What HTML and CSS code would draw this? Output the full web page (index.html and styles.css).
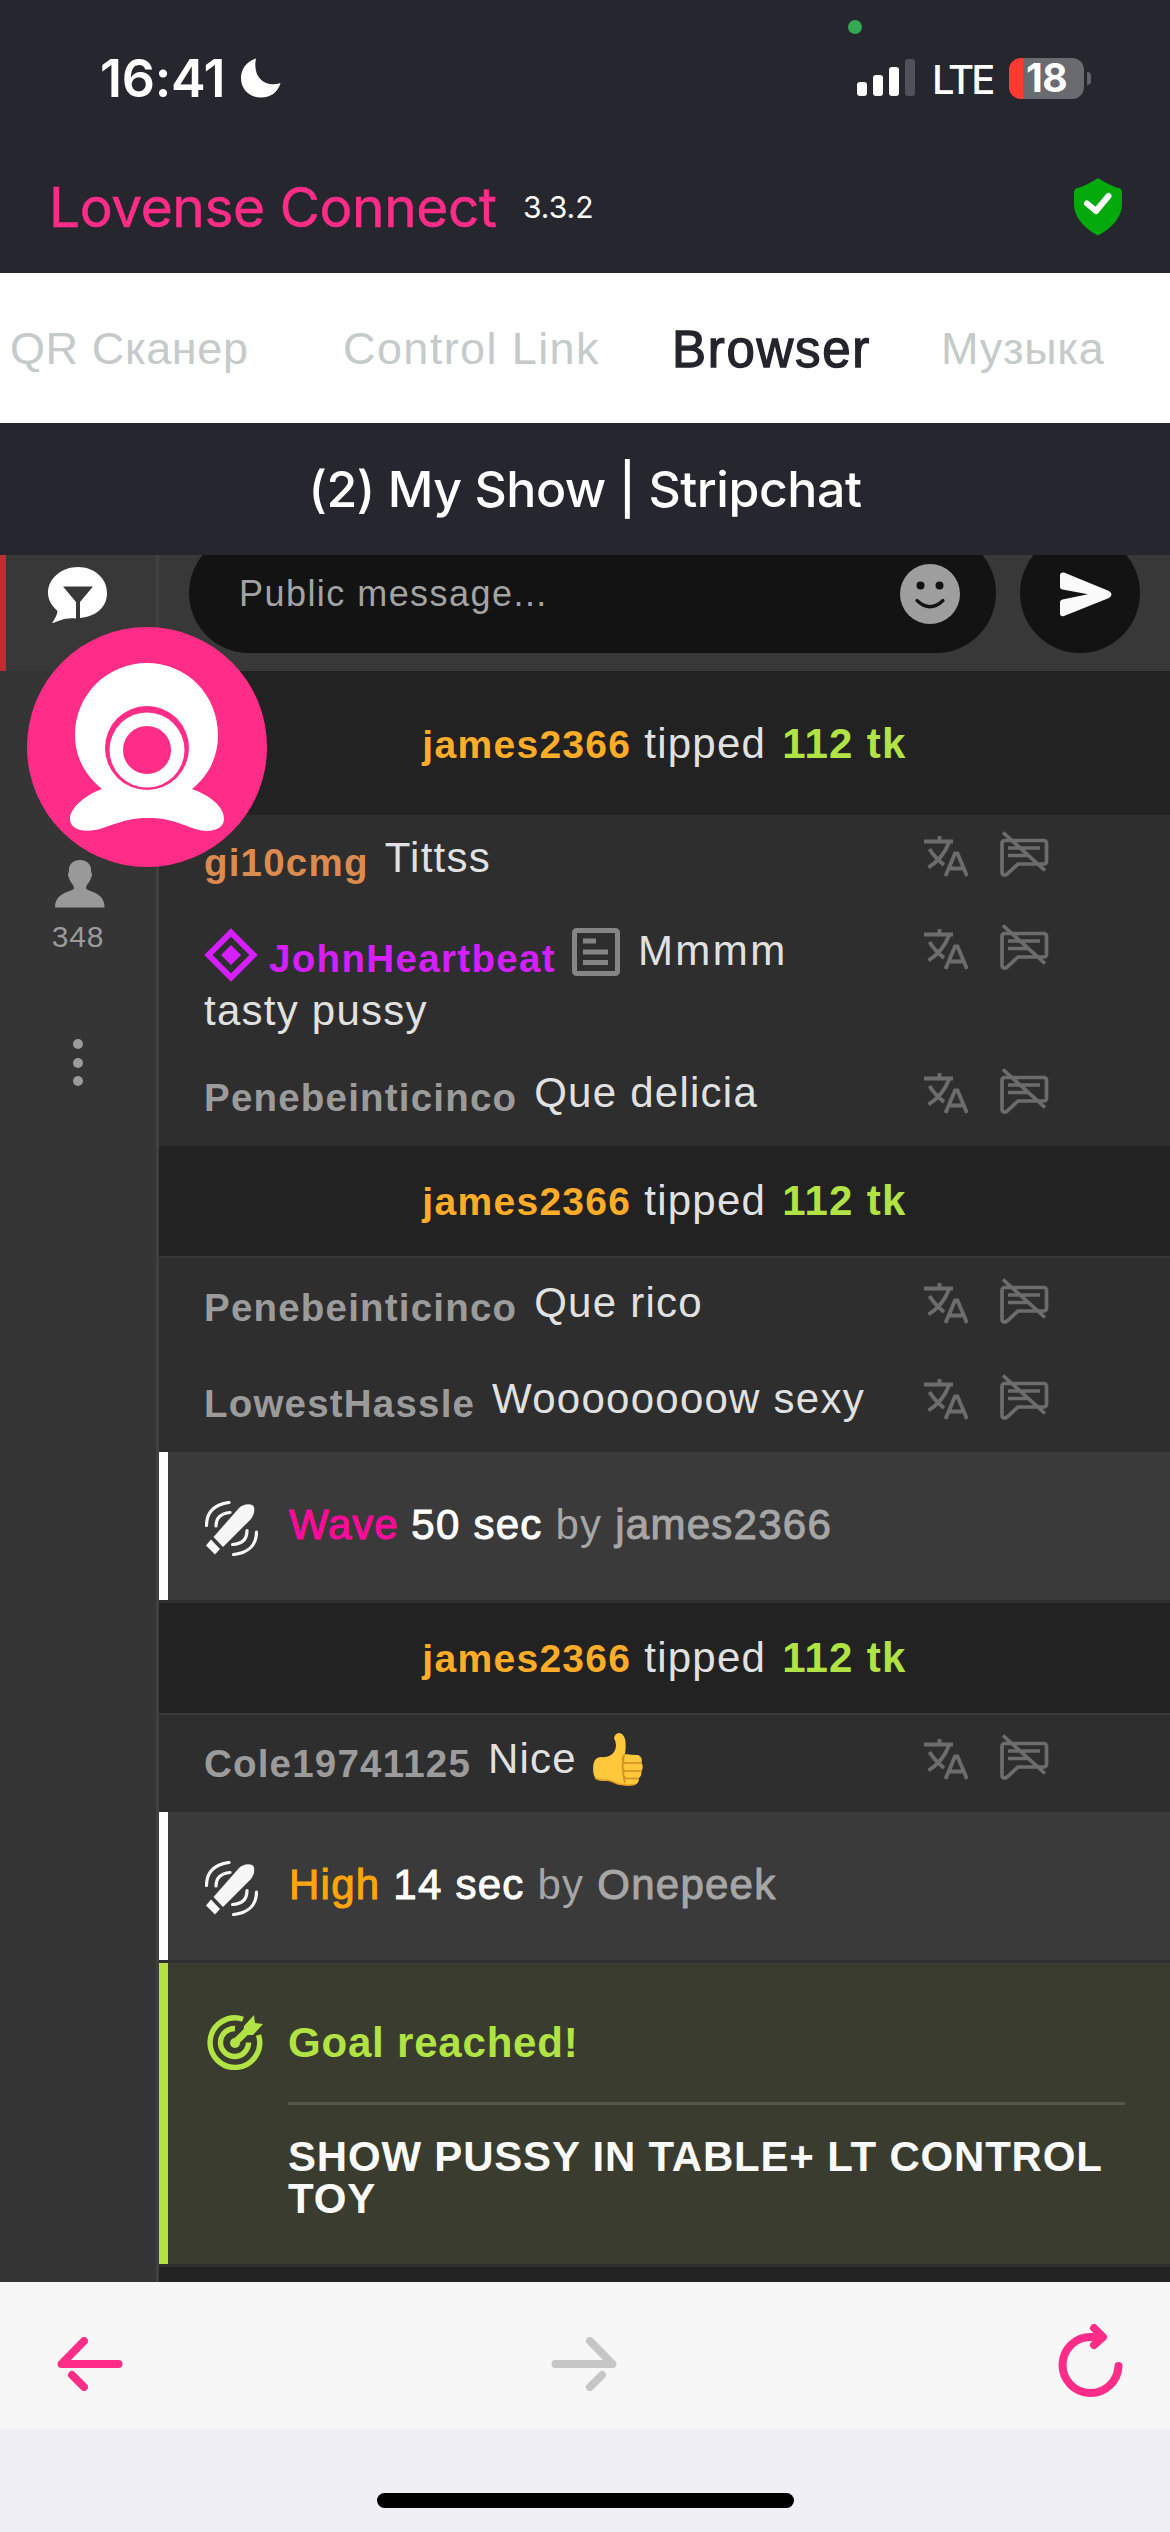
FILE: index.html
```
<!DOCTYPE html>
<html lang="ru">
<head>
<meta charset="utf-8">
<title>Lovense Connect</title>
<link rel="stylesheet" href="styles.css">
</head>
<body>
<svg width="0" height="0" class="defs" aria-hidden="true">
  <symbol id="translate" viewBox="0 0 44 41">
    <path d="M0 5.500H29M15.500 0V6M25 6.500C21 17 14 25.500 4.500 31.500M5.500 13C9 19 14 24 20 29M21.500 40L31 17.500H33.500L43 40M25.500 32.500H39" fill="none" stroke="currentColor" stroke-width="3.800"/>
  </symbol>
  <symbol id="mute" viewBox="0 0 49 46">
    <path d="M4.500 9.500H44A2.500 2.500 0 0 1 46.500 12V30.500A2.500 2.500 0 0 1 44 33H18L6.500 43.500Q2 45 2 41V12A2.500 2.500 0 0 1 4.500 9.500ZM8 17H40M8 24.500H28M3 1.500L45 39.500" fill="none" stroke="currentColor" stroke-width="3.700"/>
  </symbol>
  <symbol id="vibe" viewBox="0 0 53 55">
    <g fill="currentColor">
      <path d="M8.500 36L34 7Q39 2.500 45.500 3.500Q50.500 4 49 12Q48 15 46 18L18 46Z"/>
      <path d="M1 44.500L6 38.500L15 48L10 53.500Z"/>
    </g>
    <path d="M24 1.500C10 3.500 1.500 11 1.500 24.500M25 11.500C15.500 12.500 11 17 11 25M28.500 53.500C43 52 51.500 44 51.500 31M27.500 43.500C37 43 42 38 42 29.500" fill="none" stroke="currentColor" stroke-width="3.200" stroke-linecap="round"/>
  </symbol>
</svg>

<div class="phone">
  <header class="status">
    <i class="rec-dot"></i>
    <span class="time">16:41</span>
    <svg class="moon" width="40" height="40" viewBox="0 0 40 40"><path d="M15 .5C4 4 0 12.500 0 20C0 31 8 39.500 20 39.500C30 39.500 37 34 39.500 25C25 30 11 20 15 .5Z" fill="#fff"/></svg>
    <svg class="signal" width="58" height="38" viewBox="0 0 58 38"><g fill="#fff"><rect y="23" width="10" height="14" rx="3"/><rect x="16" y="16" width="10" height="21" rx="3"/><rect x="32" y="8" width="10" height="29" rx="3"/></g><rect x="48" width="10" height="37" rx="3" fill="#51515a"/></svg>
    <span class="net">LTE</span>
    <span class="battery">18</span><i class="nub"></i>
  </header>

  <div class="brand">
    <span class="brand-name">Lovense Connect</span>
    <span class="version">3.3.2</span>
    <svg class="shield" width="48" height="58" viewBox="0 0 48 58"><path d="M24 0Q34 7 46 10.500Q48 11.500 48 14V25C48 41 36 51 24 57.500C12 51 0 41 0 25V14Q0 11.500 2 10.500Q14 7 24 0Z" fill="#04a90b"/><path d="M13 25.500L22 33L34.500 18" fill="none" stroke="#fff" stroke-width="6" stroke-linecap="round" stroke-linejoin="round"/></svg>
  </div>

  <nav class="tabs">
    <span class="tab qr">QR Сканер</span>
    <span class="tab link">Control Link</span>
    <span class="tab active">Browser</span>
    <span class="tab music">Музыка</span>
  </nav>

  <h1 class="title">(2) My Show | Stripchat</h1>

  <div class="view">
    <aside class="side">
      <div class="side-tab">
        <svg width="60" height="56" viewBox="0 0 60 56"><path d="M30 0C46 0 59 11 59 26C59 40 49 49 32 51V35L45 19.500H15L28 35V51.500C17 50 12 54 4 56Q9 49 9.500 44C4 39 0 33 0 26C0 11 14 0 30 0Z" fill="#fff"/></svg>
      </div>
      <svg class="person" width="50" height="48" viewBox="0 0 50 48"><path d="M25 0C33 0 37 6 36 12Q38 14 36 18C35 22 31 25 31 28C31 32 50 31 49.500 47.500H0C0 31 19 32 19 28C19 25 15 22 14 18Q12 14 14 12C13 6 17 0 25 0Z" fill="#999"/></svg>
      <span class="count">348</span>
      <span class="dots"><i></i><i></i><i></i></span>
    </aside>

    <main class="chat">
      <div class="composer">
        <div class="field">
          <span>Public message...</span>
          <svg width="60" height="60" viewBox="0 0 60 60"><circle cx="30" cy="30" r="30" fill="#9e9e9e"/><circle cx="20.500" cy="21.500" r="4" fill="#131313"/><circle cx="39.500" cy="21.500" r="4" fill="#131313"/><path d="M17 36.500Q30 49 43 36.500" fill="none" stroke="#131313" stroke-width="3.200" stroke-linecap="round"/></svg>
        </div>
        <div class="send">
          <svg width="52" height="45" viewBox="0 0 52 45"><path d="M4 .5L49 19Q54 22.500 49 26L4 44Q0 45 0 41V30Q0 28 2.500 27.500L28 22.300L2.500 17.500Q0 17 0 15V3.500Q0 0 4 .5Z" fill="#fafafa"/></svg>
        </div>
      </div>

      <div class="tip first"><b class="name gold">james2366</b> tipped <b class="amount">112 tk</b></div>

      <div class="msg r1">
        <p><b class="name bronze">gi10cmg</b> Tittss</p>
        <span class="acts"><svg width="44" height="41"><use href="#translate"/></svg><svg class="mute" width="49" height="46"><use href="#mute"/></svg></span>
      </div>
      <div class="msg r2">
        <p><svg class="gem" width="54" height="54" viewBox="0 0 54 54"><path d="M27 4.500L49.500 27L27 49.500L4.500 27Z" fill="none" stroke="#d51fff" stroke-width="6"/><path d="M27 17L37 27L27 37L17 27Z" fill="#d51fff"/></svg> <b class="name violet">JohnHeartbeat</b> <svg class="note" width="48" height="48" viewBox="0 0 48 48"><rect x="2.500" y="2.500" width="43" height="43" rx="2" fill="none" stroke="#858585" stroke-width="5"/><path d="M11 13H24M11 24H36M11 34.500H36" stroke="#858585" stroke-width="5"/></svg> <span class="wide">Mmmm</span> tasty pussy</p>
        <span class="acts"><svg width="44" height="41"><use href="#translate"/></svg><svg class="mute" width="49" height="46"><use href="#mute"/></svg></span>
      </div>
      <div class="msg">
        <p><b class="name">Penebeinticinco</b> Que delicia</p>
        <span class="acts"><svg width="44" height="41"><use href="#translate"/></svg><svg class="mute" width="49" height="46"><use href="#mute"/></svg></span>
      </div>

      <div class="tip"><b class="name gold">james2366</b> tipped <b class="amount">112 tk</b></div>

      <div class="msg after-tip">
        <p><b class="name">Penebeinticinco</b> Que rico</p>
        <span class="acts"><svg width="44" height="41"><use href="#translate"/></svg><svg class="mute" width="49" height="46"><use href="#mute"/></svg></span>
      </div>
      <div class="msg">
        <p><b class="name">LowestHassle</b> Woooooooow sexy</p>
        <span class="acts"><svg width="44" height="41"><use href="#translate"/></svg><svg class="mute" width="49" height="46"><use href="#mute"/></svg></span>
      </div>

      <div class="toy">
        <svg width="53" height="55"><use href="#vibe"/></svg>
        <p><span class="pink">Wave</span> <span class="secs">50 sec</span> by <span class="who">james2366</span></p>
      </div>

      <div class="tip"><b class="name gold">james2366</b> tipped <b class="amount">112 tk</b></div>

      <div class="msg after-tip short">
        <p><b class="name">Cole19741125</b> Nice <svg class="thumb" width="51" height="53" viewBox="0 0 51 53"><path d="M21 5Q22 0 27 0Q32 2 32.500 9Q33 15 32 21Q38 22 45 22Q50 24 48.500 30Q51 34 48.500 38Q49 43 46 45Q46 52 40 52Q32 53 25 51Q18 47 14 47Q7 49 3 46Q-1 41 0.500 31Q2 24 8 24Q17 25 21 19Q25 13 21 5Z" fill="#fdc83b"/><path d="M2 45Q7 48 14 47Q19 48 25 51Q34 53 42 51.500" fill="none" stroke="#e59a24" stroke-width="1.500"/><path d="M32 21Q27 27 32 30H48M30 30Q28 36 32 38H48M31 38Q29 43 33 45.500H46M31 23Q28 35 32 50" fill="none" stroke="#d68f20" stroke-width="1.600"/></svg></p>
        <span class="acts"><svg width="44" height="41"><use href="#translate"/></svg><svg class="mute" width="49" height="46"><use href="#mute"/></svg></span>
      </div>

      <div class="toy">
        <svg width="53" height="55"><use href="#vibe"/></svg>
        <p><span class="orange">High</span> <span class="secs">14 sec</span> by <span class="who">Onepeek</span></p>
      </div>

      <div class="goal">
        <svg width="56" height="55" viewBox="0 0 56 55"><g fill="none" stroke="#b1e344"><path d="M36 4.200A24.800 24.800 0 1 0 51.500 20" stroke-width="5.400"/><path d="M28 13.500A14 14 0 1 0 41.500 27.500" stroke-width="5.400"/><path d="M28 27.500L45 11" stroke-width="7"/></g><circle cx="28" cy="28" r="5" fill="#b1e344"/><path d="M37 11L47 0L48 8L56 9L46 20L36 20Z" fill="#b1e344"/></svg>
        <div class="goal-body">
          <div class="goal-head">Goal reached!</div>
          <div class="goal-text">SHOW PUSSY IN TABLE+ LT CONTROL TOY</div>
        </div>
      </div>
    </main>

    <div class="cam">
      <svg width="240" height="240" viewBox="0 0 240 240"><circle cx="120" cy="120" r="120" fill="#ff2d87"/><path d="M120 36C160 36 191 68 191 108C191 131 181 149 165 162C182 168 197 179 197 192C197 202 184 207 168 202C145 193 136 191 121 191C106 191 99 193 76 201C58 207 43 203 43 192C43 181 58 168 75 162C59 149 48 131 48 108C48 68 80 36 120 36Z" fill="#fff"/><circle cx="120" cy="121" r="42" fill="#ff2d87"/><circle cx="120" cy="123" r="37.500" fill="#fff"/><circle cx="120" cy="123" r="24" fill="#ff2d87"/></svg>
    </div>
  </div>

  <footer class="toolbar">
    <svg width="66" height="54" viewBox="0 0 66 54"><path d="M61.500 27H4.500L27 4M15 38L27 50" fill="none" stroke="#ff2d87" stroke-width="8" stroke-linecap="round" stroke-linejoin="round"/></svg>
    <svg class="forward" width="66" height="54" viewBox="0 0 66 54"><path d="M4.500 27H61.500L39 4M51 38L39 50" fill="none" stroke="#c6c6c6" stroke-width="8" stroke-linecap="round" stroke-linejoin="round"/></svg>
    <svg class="reload" width="65" height="74" viewBox="0 0 65 74"><path d="M60.500 42A28 28 0 1 1 32.500 13H44M36 4L45 13L36 21" fill="none" stroke="#ff2d87" stroke-width="8" stroke-linecap="round" stroke-linejoin="round"/></svg>
  </footer>
  <div class="home"><i></i></div>
</div>
</body>
</html>
```
FILE: styles.css
```
* { box-sizing: border-box; }
body { margin: 0; background: #26262e; }
p, h1 { margin: 0; }
svg { display: block; flex: none; }
.defs { position: absolute; }

.phone {
  width: 1170px;
  height: 2532px;
  display: flex;
  flex-direction: column;
  overflow: hidden;
  font-family: "Liberation Sans", Arial, sans-serif;
}

/* status bar */
.status {
  position: relative;
  height: 156px;
  padding: 0 79px 0 100px;
  display: flex;
  align-items: center;
  color: #fff;
  font-family: Inter, sans-serif;
}
.rec-dot {
  position: absolute;
  left: 848px;
  top: 20px;
  width: 14px;
  height: 14px;
  border-radius: 50%;
  background: #34a853;
}
.time { width: 141px; font-size: 52px; font-weight: 600; letter-spacing: -.3px; white-space: nowrap; }
.moon { margin-right: auto; }
.signal { margin-right: 17px; }
.net { width: 77px; font-size: 40px; font-weight: 500; letter-spacing: -2.800px; padding-top: 2px; }
.battery {
  width: 75px;
  height: 41px;
  border-radius: 12px;
  background: linear-gradient(90deg, #ff3b30 14px, #6a6a71 14px);
  font-size: 39px;
  font-weight: 700;
  line-height: 40px;
  text-align: center;
  letter-spacing: -.5px;
}
.nub { width: 4px; height: 13px; margin-left: 3px; border-radius: 0 6px 6px 0; background: #62626a; }

.brand {
  height: 117px;
  padding: 0 48px 15px 49px;
  display: flex;
  align-items: center;
  font-family: Inter, sans-serif;
}
.brand-name { width: 474px; font-size: 55px; color: #ff2d87; letter-spacing: -.4px; -webkit-text-stroke: .5px #ff2d87; white-space: nowrap; }
.version { font-size: 30px; color: #fff; }
.shield { margin-left: auto; }

.tabs {
  height: 150px;
  background: #fff;
  display: flex;
  align-items: center;
  padding: 2px 0 0 10px;
  white-space: nowrap;
}
.tab { font-size: 45px; color: #c5caca; }
.qr { width: 333px; letter-spacing: .6px; }
.link { width: 329px; letter-spacing: 1.400px; }
.active { width: 269px; font-size: 51px; letter-spacing: 1.700px; color: #24242c; -webkit-text-stroke: 1.300px #24242c; }
.music { letter-spacing: .7px; }

.title {
  height: 132px;
  font: 500 50px/132px Inter, sans-serif;
  letter-spacing: -.450px;
  color: #fff;
  text-align: center;
  white-space: nowrap;
}

/* browser view */
.view { position: relative; height: 1727px; display: flex; overflow: hidden; background: #222; }
.side {
  width: 159px;
  background: #353535;
  border-right: 3px solid #404040;
  display: flex;
  flex-direction: column;
  align-items: center;
}
.side-tab {
  width: 100%;
  height: 116px;
  border-left: 6px solid #c42a35;
  background: #383838;
  padding: 12px 0 0 42px;
}
.person { margin-top: 189px; margin-left: 3px; }
.count { margin-top: 12px; font-size: 30px; line-height: 34px; letter-spacing: .8px; color: #9b9b9b; }
.dots { margin-top: 85px; display: flex; flex-direction: column; gap: 8.500px; }
.dots i { width: 10px; height: 10px; border-radius: 50%; background: #9b9b9b; }

.chat { flex: 1; min-width: 0; font-size: 42px; letter-spacing: 1.250px; color: #e1e1e1; line-height: 60px; }
.composer { height: 116px; background: #383838; display: flex; align-items: flex-end; gap: 24px; padding: 0 30px 18px 30px; }
.field {
  width: 807px;
  height: 120px;
  border-radius: 60px;
  background: #131313;
  display: flex;
  align-items: center;
  justify-content: space-between;
  padding: 2px 36px 0 50px;
  font-size: 36px;
  letter-spacing: 1.450px;
  color: #a3a3a3;
}
.send { width: 120px; height: 120px; border-radius: 50%; background: #131313; display: flex; align-items: center; justify-content: center; padding: 2px 0 0 12px; }

.name { font-size: 38.500px; line-height: 40px; color: #9b9b9b; letter-spacing: 1.200px; vertical-align: -4px; }
.tip { height: 110px; padding-top: 25px; background: #222; text-align: center; }
.tip.first { height: 144px; padding-top: 43px; }
.tip .name { font-size: 39px; letter-spacing: 1.300px; vertical-align: baseline; }
.tip .amount { margin-left: 3px; letter-spacing: 1.300px; }
.name.gold { color: #ffac28; }
.name.bronze { color: #dc8b50; }
.name.violet { color: #d51fff; }
.amount { color: #b1e344; }

.msg { height: 96px; padding: 13px 0 0 45px; display: flex; background: #2e2e2e; }
.msg p { width: 675px; height: 120px; flex: none; }
.msg .name { margin-right: 4px; }
.msg.r1 { height: 93px; }
.msg.r2 { height: 142px; }
.msg.r2 .name { margin: 0 3px 0 0; letter-spacing: 1.350px; vertical-align: -7px; }
.wide { letter-spacing: 2.500px; }
.msg.after-tip { height: 100px; border-top: 2px solid #393939; padding-top: 15px; }
.msg.short { height: 99px; padding-top: 14px; }
.acts { display: flex; gap: 32px; margin-left: 45px; padding-top: 10px; color: #6c6c6c; }
.r1 .acts, .r2 .acts { padding-top: 8px; }
.acts .mute { margin-top: -5px; }
.gem, .note, .thumb { display: inline-block; margin: -14px 0; }
.gem { vertical-align: -3px; margin-right: -2px; }
.note { vertical-align: 3px; margin-right: 5px; }
.msg .thumb { vertical-align: 1px; margin: -14px 0 -14px 3px; }

.toy {
  height: 151px;
  border-bottom: 3px solid #2f2f2f;
  box-shadow: inset 9px 0 #fff;
  background: #3a3a3a;
  display: flex;
  padding: 43px 0 0 46px;
  gap: 31px;
  color: #a6a6a6;
}
.toy svg { margin-top: 6px; color: #f7f7f7; }
.pink { color: #ff0a9d; -webkit-text-stroke: 1px #ff0a9d; letter-spacing: .9px; }
.orange { color: #ffa50a; -webkit-text-stroke: 1px #ffa50a; }
.secs { color: #fff; -webkit-text-stroke: 1px #fff; }
.who { -webkit-text-stroke: 1px #a6a6a6; }

.goal {
  height: 304px;
  border-bottom: 3px solid #2f2f2f;
  box-shadow: inset 9px 0 #b1e344;
  background: #393c2e;
  display: flex;
  gap: 25px;
  padding: 52px 45px 0 48px;
  font-weight: 700;
}
.goal-body { flex: 1; margin-top: -2px; }
.goal-head { height: 92px; border-bottom: 3px solid #54574a; color: #b1e344; letter-spacing: .8px; }
.goal-text { padding-top: 31px; line-height: 42px; letter-spacing: .800px; color: #fafafa; }

.cam { position: absolute; left: 27px; top: 72px; }

/* bottom bars */
.toolbar { height: 147px; background: #f7f7f7; display: flex; align-items: center; justify-content: space-between; padding: 17px 47px 0 57px; }
.forward { margin: 0 13px 0 0; }
.reload { margin-top: -6px; }
.home { height: 103px; background: #f0eff5; display: flex; justify-content: center; padding-top: 64px; }
.home i { width: 417px; height: 15px; border-radius: 8px; background: #000; }
```
